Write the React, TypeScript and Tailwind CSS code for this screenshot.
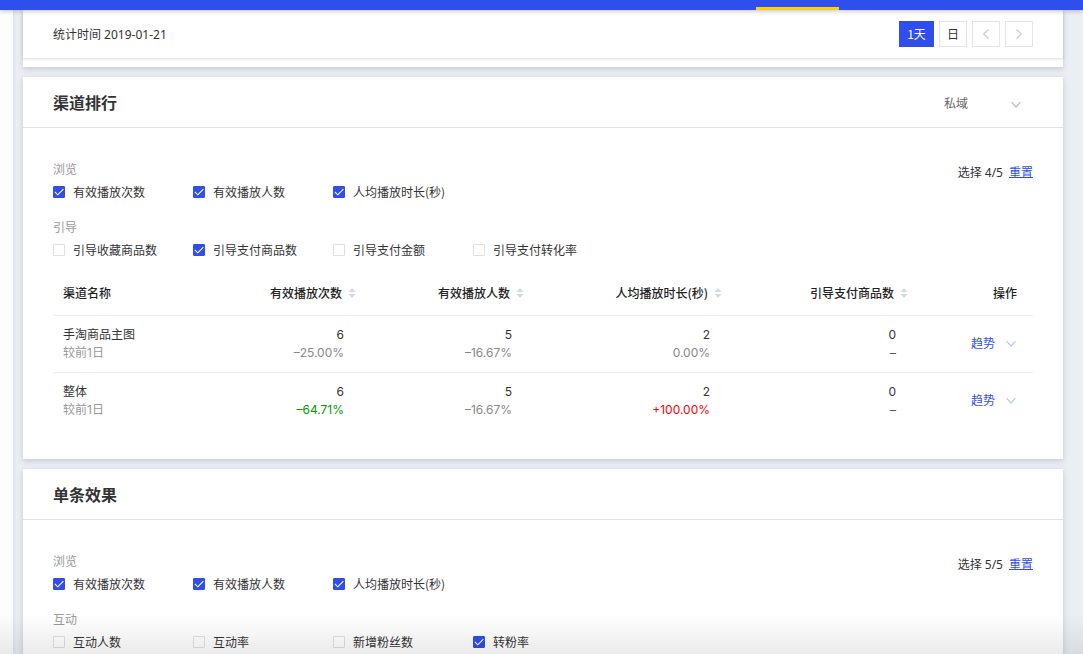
import React from 'react';

type Metric = { name: string; checked?: boolean };
type MetricGroup = { title: string; metrics: Metric[] };
type Cell = { value: string; change: string; tone?: 'up' | 'down' | 'none' };
type Row = { name: string; cells: Cell[] };

const browse: MetricGroup = {
  title: '浏览',
  metrics: [
    { name: '有效播放次数', checked: true },
    { name: '有效播放人数', checked: true },
    { name: '人均播放时长(秒)', checked: true },
  ],
};

const guide: MetricGroup = {
  title: '引导',
  metrics: [
    { name: '引导收藏商品数' },
    { name: '引导支付商品数', checked: true },
    { name: '引导支付金额' },
    { name: '引导支付转化率' },
  ],
};

const interact: MetricGroup = {
  title: '互动',
  metrics: [
    { name: '互动人数' },
    { name: '互动率' },
    { name: '新增粉丝数' },
    { name: '转粉率', checked: true },
  ],
};

const columns = ['有效播放次数', '有效播放人数', '人均播放时长(秒)', '引导支付商品数'];

const rows: Row[] = [
  {
    name: '手淘商品主图',
    cells: [
      { value: '6', change: '–25.00%' },
      { value: '5', change: '–16.67%' },
      { value: '2', change: '0.00%' },
      { value: '0', change: '–', tone: 'none' },
    ],
  },
  {
    name: '整体',
    cells: [
      { value: '6', change: '–64.71%', tone: 'down' },
      { value: '5', change: '–16.67%' },
      { value: '2', change: '+100.00%', tone: 'up' },
      { value: '0', change: '–', tone: 'none' },
    ],
  },
];

const tones = {
  up: 'text-[#ff0000]',
  down: 'text-[#009900]',
  none: 'text-[#555]',
};

function Chevron({ dir, className }: { dir: 'down' | 'left' | 'right'; className: string }) {
  const d = {
    down: 'M1.5 3.2 6 8 10.5 3.2',
    left: 'M8.5 1.5 3.7 6 8.5 10.5',
    right: 'M3.5 1.5 8.3 6 3.5 10.5',
  }[dir];
  return (
    <svg viewBox="0 0 12 12" fill="none" stroke="currentColor" strokeWidth="1.2" className={className} aria-hidden="true">
      <path d={d} />
    </svg>
  );
}

function SortIcon() {
  return (
    <svg viewBox="0 0 8 10" className="h-2.5 w-2 text-[#cbdcec]" fill="currentColor" aria-hidden="true">
      <path d="M4 0 7.5 4H.5ZM4 10 .5 6h7Z" />
    </svg>
  );
}

function Check({ metric }: { metric: Metric }) {
  return (
    <label className="flex w-[140px] items-center gap-2 leading-[18px] text-[#333]">
      <span className="grid size-3">
        <input
          type="checkbox"
          defaultChecked={metric.checked}
          className="peer col-start-1 row-start-1 size-3 appearance-none rounded-[1px] border border-[#dfdfdf] bg-white checked:border-[#2f4eeb] checked:bg-[#2f4eeb]"
        />
        <svg
          viewBox="0 0 12 12"
          fill="none"
          stroke="white"
          className="pointer-events-none col-start-1 row-start-1 hidden size-3 peer-checked:block"
          aria-hidden="true"
        >
          <path d="M1.8 5.8 4.8 8.8 10.4 3.2" strokeWidth="1.1" />
        </svg>
      </span>
      {metric.name}
    </label>
  );
}

function Filters({ groups, count }: { groups: MetricGroup[]; count: string }) {
  return (
    <div className="flex items-start justify-between">
      <div className="flex flex-col gap-[17px]">
        {groups.map((g) => (
          <div key={g.title} role="group" aria-label={g.title} className="flex flex-col gap-[5px]">
            <div className="leading-[18px] text-[#999]">{g.title}</div>
            <div className="flex">
              {g.metrics.map((m) => (
                <Check key={m.name} metric={m} />
              ))}
            </div>
          </div>
        ))}
      </div>
      <div className="mt-1 flex gap-1.5 font-['Noto_Sans','Noto_Sans_CJK_SC',sans-serif] leading-[18px]">
        <span>选择 {count}</span>
        <button
          type="button"
          className="text-[#2f4eeb] underline underline-offset-0 [text-decoration-skip-ink:none]"
        >
          重置
        </button>
      </div>
    </div>
  );
}

function Card({ title, action, children }: { title: string; action?: React.ReactNode; children: React.ReactNode }) {
  return (
    <section className="bg-white shadow-[0_2px_6px_rgba(40,50,70,0.2)]">
      <header className="flex h-[51px] items-center justify-between border-b border-[#e2e3e6] px-[30px]">
        <h2 className="text-base font-bold">{title}</h2>
        {action}
      </header>
      <div className="px-[30px] pt-8 pb-[30px]">{children}</div>
    </section>
  );
}

function ChannelTable() {
  return (
    <table className="mt-3 w-full table-fixed border-collapse">
      <colgroup>
        <col />
        <col className="w-[160px]" />
        <col className="w-[168px]" />
        <col className="w-[198px]" />
        <col className="w-[186px]" />
        <col className="w-[115px]" />
      </colgroup>
      <thead>
        <tr className="h-11 border-b border-[#ededf0] text-[#222]">
          <th className="pl-2.5 text-left font-medium">渠道名称</th>
          {columns.map((c) => (
            <th key={c} className="pr-2.5 font-medium">
              <button type="button" className="flex w-full items-center justify-end gap-1.5 whitespace-nowrap">
                {c}
                <SortIcon />
              </button>
            </th>
          ))}
          <th className="pr-4 text-right font-medium">操作</th>
        </tr>
      </thead>
      <tbody className="font-['Inter','Noto_Sans_CJK_SC',sans-serif] leading-[18px]">
        {rows.map((r) => (
          <tr key={r.name} className="border-b border-[#ededf0] last:border-b-0">
            <td className="py-2.5 pl-2.5">
              <div>{r.name}</div>
              <div className="text-[#999]">较前1日</div>
            </td>
            {r.cells.map((c, i) => (
              <td key={columns[i]} className="py-2.5 pr-[22px] text-right">
                <div>{c.value}</div>
                <div className={c.tone ? tones[c.tone] : 'text-[#888]'}>{c.change}</div>
              </td>
            ))}
            <td className="pr-4">
              <button type="button" className="flex w-full items-center justify-end gap-2.5 text-[#2f4eeb]">
                趋势
                <Chevron dir="down" className="size-3 text-[#bccbdb]" />
              </button>
            </td>
          </tr>
        ))}
      </tbody>
    </table>
  );
}

export default function App() {
  const pager = 'grid h-[26px] w-7 place-items-center border border-[#e4e4e6]';
  return (
    <div className="relative flex h-screen flex-col overflow-hidden bg-[#ebeff4] font-['Noto_Sans_CJK_SC',sans-serif] text-xs text-[#333]">
      <nav className="z-10 flex h-2.5 shrink-0 items-end justify-end bg-[#2f4eeb] pr-[244px] shadow-[0_1px_5px_rgba(0,0,0,0.25)]">
        <span className="h-[3px] w-[83px] bg-[#fbd00d]" />
      </nav>
      <div className="flex min-h-0 flex-1 gap-2.5">
        <aside className="w-[13px] shrink-0 bg-[#fdfdfd] shadow-[0_0_4px_rgba(40,50,70,0.12)]" />
        <main className="flex min-w-0 flex-1 flex-col gap-2.5 pr-5">
          <section className="bg-white pb-[9px] shadow-[0_2px_6px_rgba(40,50,70,0.2)]">
            <div className="flex h-12 items-center justify-between px-[30px] shadow-[0_1px_3px_rgba(0,0,0,0.14)]">
              <span className="pt-0.5 font-['Noto_Sans','Noto_Sans_CJK_SC',sans-serif] leading-[18px]">
                统计时间 2019-01-21
              </span>
              <div className="flex gap-[5px]">
                <button type="button" className="h-[26px] w-[35px] bg-[#2f4eeb] text-white">
                  1天
                </button>
                <button type="button" className={pager}>
                  日
                </button>
                <button type="button" aria-label="前一天" className={pager}>
                  <Chevron dir="left" className="size-3 text-[#ccc]" />
                </button>
                <button type="button" aria-label="后一天" className={pager}>
                  <Chevron dir="right" className="size-3 text-[#ccc]" />
                </button>
              </div>
            </div>
          </section>

          <Card
            title="渠道排行"
            action={
              <div className="relative flex items-center pt-0.5">
                <select
                  aria-label="渠道范围"
                  className="w-[100px] appearance-none bg-transparent pl-[11px] text-[#666]"
                >
                  <option>私域</option>
                </select>
                <Chevron dir="down" className="pointer-events-none absolute top-[6px] right-[11px] size-3 text-[#bbb]" />
              </div>
            }
          >
            <Filters groups={[browse, guide]} count="4/5" />
            <ChannelTable />
          </Card>

          <Card title="单条效果">
            <Filters groups={[browse, interact]} count="5/5" />
          </Card>
        </main>
      </div>
      <div className="pointer-events-none absolute inset-x-0 bottom-0 z-20 h-10 bg-linear-to-b from-transparent to-black/8" />
    </div>
  );
}
